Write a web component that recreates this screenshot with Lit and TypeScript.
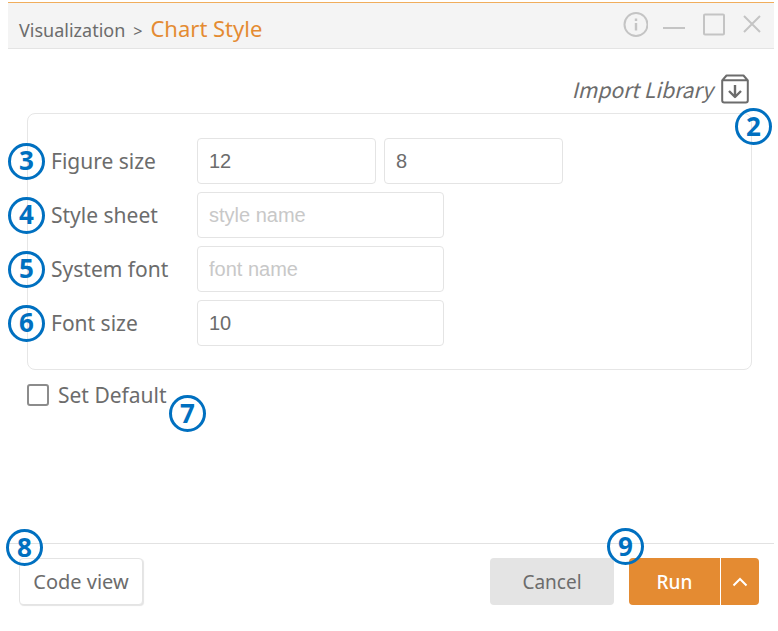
import { LitElement, html, css } from "lit";
import { customElement, property } from "lit/decorators.js";

@customElement("step-badge")
class StepBadge extends LitElement {
  @property({ type: Number }) step = 0;

  static styles = css`
    :host {
      box-sizing: border-box;
      position: absolute;
      z-index: 1;
      display: flex;
      align-items: center;
      justify-content: center;
      width: 37px;
      height: 37px;
      border: 3px solid #0070c0;
      border-radius: 50%;
      color: #0070c0;
      font: 700 26px/32px "Open Sans", "Noto Sans", sans-serif;
      pointer-events: none;
    }
    span {
      padding-bottom: 2px;
    }
  `;

  render() {
    return html`<span>${this.step}</span>`;
  }
}

@customElement("app-root")
class AppRoot extends LitElement {
  static styles = css`
    :host {
      display: block;
      background: #fff;
      color: #6c6c6c;
      font: 400 21px/28px "Noto Sans", "Open Sans", sans-serif;
    }
    * {
      box-sizing: border-box;
    }
    button,
    input {
      font: inherit;
      color: inherit;
      margin: 0;
    }
    .dialog {
      display: flex;
      flex-direction: column;
      min-height: 100vh;
      padding: 2px 4px 0 8px;
    }
    .header {
      display: flex;
      justify-content: space-between;
      align-items: center;
      height: 47px;
      padding: 0 9px 0 11px;
      background: #f4f4f4;
      border-top: 1px solid #f0ad5c;
      border-bottom: 1px solid #e4e4e4;
    }
    .title {
      display: flex;
      align-items: baseline;
      gap: 8px;
      margin: 8px 0 0;
      font-size: 18px;
      font-weight: 400;
    }
    .sep {
      font-size: 16px;
    }
    .current {
      color: #e48b32;
      font-size: 22px;
    }
    .tools {
      display: flex;
      gap: 13px;
      margin-bottom: 2px;
      color: #c4c4c4;
    }
    .icon-btn {
      display: flex;
      padding: 0;
      border: 0;
      background: none;
    }
    svg {
      display: block;
      fill: none;
      stroke: currentColor;
      stroke-width: 2;
    }
    .content {
      flex: 1;
      padding: 24px 22px 24px 19px;
    }
    .import {
      display: flex;
      align-items: center;
      gap: 8px;
      height: 32px;
      margin: 0 3px 8px auto;
      padding: 0;
      border: 0;
      background: none;
      font-family: "Noto Sans CJK KR", sans-serif;
      font-style: italic;
    }
    .panel {
      position: relative;
      display: flex;
      flex-direction: column;
      gap: 8px;
      padding: 24px 23px 23px;
      border: 1px solid #e6e6e6;
      border-radius: 8px;
    }
    .row {
      position: relative;
      display: grid;
      grid-template-columns: 146px 1fr;
      align-items: center;
    }
    .fields {
      display: flex;
      gap: 8px;
    }
    .input {
      width: 247px;
      height: 46px;
      padding: 0 11px;
      border: 1px solid #e4e4e4;
      border-radius: 4px;
      background: #fff;
      font: 20px "Liberation Sans", sans-serif;
      outline: none;
    }
    .half {
      width: 179px;
    }
    .input::placeholder {
      color: #c8c8c8;
    }
    .default {
      position: relative;
      display: inline-flex;
      align-items: center;
      gap: 9px;
      margin-top: 11px;
    }
    .check {
      appearance: none;
      width: 22px;
      height: 22px;
      border: 2px solid #8c8c8c;
      border-radius: 3px;
      background: #fff;
    }
    .footer {
      position: relative;
      display: flex;
      justify-content: space-between;
      padding: 14px 15px 26px 11px;
      border-top: 1px solid #e2e2e2;
    }
    .btn {
      height: 47px;
      width: 124px;
      padding: 0;
      border: 0;
      border-radius: 4px;
      font-size: 19px;
    }
    .code {
      background: #fff;
      border: 1px solid #e4e4e4;
      box-shadow: 1px 1px 1px #e4e4e4;
      font-size: 20px;
    }
    .actions {
      position: relative;
      display: flex;
      gap: 15px;
    }
    .cancel {
      background: #e4e4e4;
    }
    .split {
      position: relative;
      display: flex;
      gap: 1px;
      color: #fff;
    }
    .run {
      width: 91px;
      border-radius: 4px 0 0 4px;
      background: #e48b32;
      font-weight: 500;
    }
    .more {
      display: flex;
      align-items: center;
      justify-content: center;
      width: 38px;
      border-radius: 0 4px 4px 0;
      background: #e48b32;
    }
    .at-label {
      left: -43px;
    }
    .at-corner {
      top: -6px;
      right: -21px;
    }
    .at-end {
      left: 142px;
      top: 14px;
    }
    .at-code {
      left: -2px;
      top: -15px;
    }
    .at-run {
      left: -22px;
      top: -30px;
    }
  `;

  private field(step: number, id: string, label: string, value: string, placeholder: string) {
    return html`
      <div class="row">
        <step-badge class="at-label" .step=${step}></step-badge>
        <label for=${id}>${label}</label>
        <div class="fields">
          <input class="input" id=${id} type="text" .value=${value} placeholder=${placeholder} />
        </div>
      </div>
    `;
  }

  render() {
    return html`
      <main class="dialog">
        <header class="header">
          <h1 class="title">
            <span>Visualization</span><span class="sep">&gt;</span><span class="current">Chart Style</span>
          </h1>
          <div class="tools">
            <button class="icon-btn" aria-label="Information">
              <svg width="26" height="26" viewBox="0 0 26 26">
                <circle cx="14" cy="12.5" r="11.5" />
                <path d="M14 11V18.5M14 6.5v2.5" stroke-width="2.4" />
              </svg>
            </button>
            <button class="icon-btn" aria-label="Minimize">
              <svg width="26" height="26" viewBox="0 0 26 26"><path d="M2 16H24" /></svg>
            </button>
            <button class="icon-btn" aria-label="Maximize">
              <svg width="26" height="26" viewBox="0 0 26 26"><rect x="4" y="2.5" width="20" height="20" rx="1" /></svg>
            </button>
            <button class="icon-btn" aria-label="Close">
              <svg width="26" height="26" viewBox="0 0 26 26"><path d="M5 4L21 20M21 4L5 20" /></svg>
            </button>
          </div>
        </header>

        <section class="content">
          <button class="import">
            <span>Import Library</span>
            <svg width="28" height="30" viewBox="0 0 28 30" stroke-linejoin="round">
              <path d="M1.2 6.5L5.5 1.5H22.5L26.8 6.5V26.5Q26.8 28.5 24.8 28.5H3.2Q1.2 28.5 1.2 26.5ZM1.2 6.2H26.8" />
              <path d="M14 11V23M8 17L14 23L20 17" stroke-width="2.4" />
            </svg>
          </button>

          <div class="panel">
            <step-badge class="at-corner" .step=${2}></step-badge>
            <div class="row">
              <step-badge class="at-label" .step=${3}></step-badge>
              <label for="width">Figure size</label>
              <div class="fields">
                <input class="input half" id="width" type="text" .value=${"12"} />
                <input class="input half" id="height" type="text" aria-label="Figure height" .value=${"8"} />
              </div>
            </div>
            ${this.field(4, "style", "Style sheet", "", "style name")}
            ${this.field(5, "font", "System font", "", "font name")}
            ${this.field(6, "size", "Font size", "10", "")}
          </div>

          <label class="default">
            <input class="check" type="checkbox" />
            <span>Set Default</span>
            <step-badge class="at-end" .step=${7}></step-badge>
          </label>
        </section>

        <footer class="footer">
          <step-badge class="at-code" .step=${8}></step-badge>
          <button class="btn code">Code view</button>
          <div class="actions">
            <button class="btn cancel">Cancel</button>
            <div class="split">
              <step-badge class="at-run" .step=${9}></step-badge>
              <button class="btn run">Run</button>
              <button class="btn more" aria-label="More run options">
                <svg width="16" height="10" viewBox="0 0 16 10"><path d="M1.5 8.5L8 2L14.5 8.5" /></svg>
              </button>
            </div>
          </div>
        </footer>
      </main>
    `;
  }
}
